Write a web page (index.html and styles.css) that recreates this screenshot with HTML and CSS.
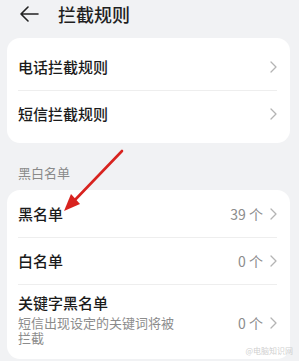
FILE: index.html
```html
<!DOCTYPE html>
<html lang="zh-CN">
<head>
<meta charset="utf-8">
<link rel="stylesheet" href="styles.css">
</head>
<body>
<div class="page">
  <div class="header">
    <svg class="back" width="20" height="16" viewBox="0 0 20 16"><path d="M2 8 H19 M9 1 L2 8 L9 15" fill="none" stroke="#222" stroke-width="1.6" stroke-linecap="round" stroke-linejoin="round"/></svg>
    <span class="title">拦截规则</span>
  </div>
  <div class="card card-top">
    <div class="row"><span class="name">电话拦截规则</span><span class="right"><svg class="chev" width="7" height="12" viewBox="0 0 7 12"><path d="M1 1 L6 6 L1 11" fill="none" stroke="#b4b4b4" stroke-width="1.3" stroke-linecap="round" stroke-linejoin="round"/></svg></span></div>
    <div class="row"><span class="name">短信拦截规则</span><span class="right"><svg class="chev" width="7" height="12" viewBox="0 0 7 12"><path d="M1 1 L6 6 L1 11" fill="none" stroke="#b4b4b4" stroke-width="1.3" stroke-linecap="round" stroke-linejoin="round"/></svg></span></div>
  </div>
  <div class="label">黑白名单</div>
  <div class="card card-list">
    <div class="row"><span class="name">黑名单</span><span class="right"><span class="val">39 个</span><svg class="chev" width="7" height="12" viewBox="0 0 7 12"><path d="M1 1 L6 6 L1 11" fill="none" stroke="#b4b4b4" stroke-width="1.3" stroke-linecap="round" stroke-linejoin="round"/></svg></span></div>
    <div class="row"><span class="name">白名单</span><span class="right"><span class="val">0 个</span><svg class="chev" width="7" height="12" viewBox="0 0 7 12"><path d="M1 1 L6 6 L1 11" fill="none" stroke="#b4b4b4" stroke-width="1.3" stroke-linecap="round" stroke-linejoin="round"/></svg></span></div>
    <div class="row row-tall">
      <div class="texts">
        <span class="name">关键字黑名单</span>
        <span class="sub">短信出现设定的关键词将被拦截</span>
      </div>
      <span class="right"><span class="val">0 个</span><svg class="chev" width="7" height="12" viewBox="0 0 7 12"><path d="M1 1 L6 6 L1 11" fill="none" stroke="#b4b4b4" stroke-width="1.3" stroke-linecap="round" stroke-linejoin="round"/></svg></span>
    </div>
  </div>
  <svg class="arrow" width="299" height="361" viewBox="0 0 299 361">
    <path d="M122 151 L73 202" stroke="#d8231f" stroke-width="2.6" stroke-linecap="round" fill="none"/>
    <polygon points="64,211 80,204 71,194" fill="#d8231f"/>
  </svg>
  <span class="mark">@电脑知识网</span>
</div>
</body>
</html>
```
FILE: styles.css
```css
html, body {
  margin: 0;
  padding: 0;
  background: #f1f2f4;
}
body {
  font-family: "Noto Sans CJK SC", "Noto Sans", sans-serif;
  color: #1b1b1b;
}
.page {
  position: relative;
  width: 299px;
  height: 361px;
  overflow: hidden;
}
.header {
  height: 28px;
  display: flex;
  align-items: center;
  padding-left: 19px;
}
.back {
  display: block;
}
.title {
  margin-left: 19px;
  font-size: 18px;
  font-weight: 500;
  line-height: 24px;
  color: #1f1f1f;
}
.card {
  background: #fff;
  border-radius: 13px;
  margin: 0 9px 0 7px;
}
.card-top {
  margin-top: 10px;
  padding: 6px 0;
}
.card-list {
  margin-top: 8px;
  padding: 1px 0 0;
}
.row {
  min-height: 46px;
  margin: 0 13px 0 11px;
  display: flex;
  align-items: center;
  justify-content: space-between;
}
.row + .row {
  border-top: 1px solid #eeeeee;
}
.name {
  font-size: 15px;
  font-weight: 500;
  line-height: 20px;
}
.right {
  display: flex;
  align-items: center;
  gap: 7px;
}
.val {
  font-size: 14px;
  color: #8c8c8c;
  line-height: 18px;
}
.chev {
  display: block;
}
.row-tall {
  align-items: flex-start;
  padding: 8px 0 14px;
}
.row-tall .right {
  margin-top: 21px;
}
.texts {
  display: flex;
  flex-direction: column;
  width: 165px;
}
.sub {
  margin-top: 2px;
  font-size: 13px;
  line-height: 15px;
  color: #8c8c8c;
}
.label {
  margin: 21px 0 0 18px;
  font-size: 13px;
  line-height: 18px;
  color: #8a8a8a;
}
.arrow {
  position: absolute;
  left: 0;
  top: 0;
  pointer-events: none;
}
.mark {
  position: absolute;
  right: 6px;
  top: 346px;
  font-size: 8px;
  color: #cfcfcf;
  line-height: 10px;
}
```
